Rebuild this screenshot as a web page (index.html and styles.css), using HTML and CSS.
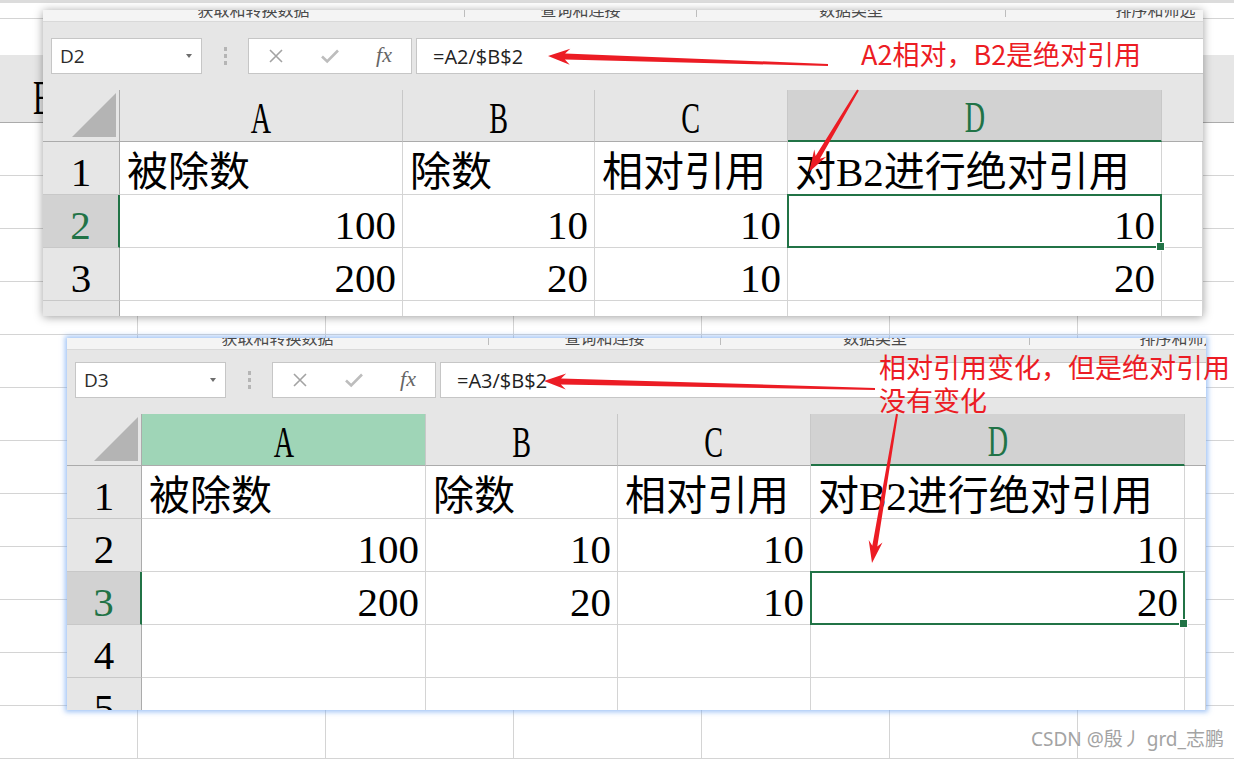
FILE: index.html
```html
<!DOCTYPE html>
<html lang="zh-CN">
<head>
<meta charset="utf-8">
<title>相对引用与绝对引用</title>
<link rel="stylesheet" href="styles.css">
</head>
<body>
<div class="page">
  <div class="bg">
    <div class="bg-top"></div>
    <div class="bg-ribbon"></div>
    <div class="bg-gap"></div>
    <div class="bg-head"><span class="bg-letter">E</span></div>
    <div class="bg-grid"></div>
  </div>

  <section class="win win1">
    <div class="strip">
      <div class="grp g1"><span>获取和转换数据</span></div>
      <div class="grp g2"><span>查询和连接</span></div>
      <div class="grp g3"><span>数据类型</span></div>
      <div class="grp g4"><span>排序和筛选</span></div>
    </div>
    <div class="toolbar">
      <div class="namebox"><span>D2</span><i class="caret"></i></div>
      <div class="dots"><i></i><i></i><i></i></div>
      <div class="btns">
        <span class="btn"><svg width="16" height="16" viewBox="0 0 16 16"><path d="M2 2L14 14M14 2L2 14" stroke="#a3a3a3" stroke-width="1.6" fill="none"/></svg></span>
        <span class="btn"><svg width="20" height="16" viewBox="0 0 20 16"><path d="M2 8.5l5.2 5L18 2.5" stroke="#bdbdbd" stroke-width="2.6" fill="none"/></svg></span>
        <span class="btn fx">fx</span>
      </div>
      <div class="formula">=A2/$B$2</div>
    </div>
    <div class="sheet">
      <div class="corner"><svg width="44" height="44" viewBox="0 0 44 44"><polygon points="0,44 44,44 44,0" fill="#b4b4b4"/></svg></div>
      <div class="ch"><span>A</span></div>
      <div class="ch"><span>B</span></div>
      <div class="ch"><span>C</span></div>
      <div class="ch sel"><span>D</span></div>
      <div class="ch last"></div>

      <div class="rh">1</div>
      <div class="c">被除数</div>
      <div class="c">除数</div>
      <div class="c">相对引用</div>
      <div class="c">对B2进行绝对引用</div>
      <div class="c"></div>

      <div class="rh sel">2</div>
      <div class="c n">100</div>
      <div class="c n">10</div>
      <div class="c n">10</div>
      <div class="c n act">10</div>
      <div class="c"></div>

      <div class="rh">3</div>
      <div class="c n">200</div>
      <div class="c n">20</div>
      <div class="c n">10</div>
      <div class="c n">20</div>
      <div class="c"></div>

      <div class="rh">4</div>
      <div class="c"></div>
      <div class="c"></div>
      <div class="c"></div>
      <div class="c"></div>
      <div class="c"></div>
    </div>
  </section>

  <section class="win win2">
    <div class="strip">
      <div class="grp g1"><span>获取和转换数据</span></div>
      <div class="grp g2"><span>查询和连接</span></div>
      <div class="grp g3"><span>数据类型</span></div>
      <div class="grp g4"><span>排序和筛选</span></div>
    </div>
    <div class="toolbar">
      <div class="namebox"><span>D3</span><i class="caret"></i></div>
      <div class="dots"><i></i><i></i><i></i></div>
      <div class="btns">
        <span class="btn"><svg width="16" height="16" viewBox="0 0 16 16"><path d="M2 2L14 14M14 2L2 14" stroke="#a3a3a3" stroke-width="1.6" fill="none"/></svg></span>
        <span class="btn"><svg width="20" height="16" viewBox="0 0 20 16"><path d="M2 8.5l5.2 5L18 2.5" stroke="#bdbdbd" stroke-width="2.6" fill="none"/></svg></span>
        <span class="btn fx">fx</span>
      </div>
      <div class="formula">=A3/$B$2</div>
    </div>
    <div class="sheet">
      <div class="corner"><svg width="44" height="44" viewBox="0 0 44 44"><polygon points="0,44 44,44 44,0" fill="#b4b4b4"/></svg></div>
      <div class="ch hl"><span>A</span></div>
      <div class="ch"><span>B</span></div>
      <div class="ch"><span>C</span></div>
      <div class="ch sel"><span>D</span></div>
      <div class="ch last"></div>

      <div class="rh">1</div>
      <div class="c">被除数</div>
      <div class="c">除数</div>
      <div class="c">相对引用</div>
      <div class="c">对B2进行绝对引用</div>
      <div class="c"></div>

      <div class="rh">2</div>
      <div class="c n">100</div>
      <div class="c n">10</div>
      <div class="c n">10</div>
      <div class="c n">10</div>
      <div class="c"></div>

      <div class="rh sel">3</div>
      <div class="c n">200</div>
      <div class="c n">20</div>
      <div class="c n">10</div>
      <div class="c n act">20</div>
      <div class="c"></div>

      <div class="rh">4</div>
      <div class="c"></div>
      <div class="c"></div>
      <div class="c"></div>
      <div class="c"></div>
      <div class="c"></div>

      <div class="rh">5</div>
      <div class="c"></div>
      <div class="c"></div>
      <div class="c"></div>
      <div class="c"></div>
      <div class="c"></div>
    </div>
  </section>

  <div class="note note1">A2相对，B2是绝对引用</div>
  <div class="note note2">相对引用变化，但是绝对引用<br>没有变化</div>

  <svg class="arrows" width="1234" height="759" viewBox="0 0 1234 759">
    <polygon points="548,56 569.7,64.7 564.9,59.5 828,66 828,64 565.1,53.5 570.3,48.7" fill="#ec1c24"/>
    <polygon points="809,172 826.3,156.7 819.9,158.7 858.9,90.5 857.1,89.5 815.6,156.1 814.3,149.5" fill="#ec1c24"/>
    <polygon points="544,381 565.8,389.5 560.9,384.4 875,390 875,388 561.1,378.4 566.2,373.5" fill="#ec1c24"/>
    <polygon points="872,563 882.5,542.5 877.3,546.6 898,414.2 896,413.8 872.3,545.8 868.7,540.1" fill="#ec1c24"/>
  </svg>

  <div class="mark">CSDN @殷丿 grd_志鹏</div>
</div>
</body>
</html>
```

FILE: styles.css
```css
* { box-sizing: border-box; margin: 0; padding: 0; }
html, body { width: 1234px; height: 759px; overflow: hidden; background: #fff; }
body { font-family: "Noto Sans CJK SC", sans-serif; }

.page { position: relative; width: 1234px; height: 759px; overflow: hidden; background: #fff; }

/* background workbook */
.bg { display: flex; flex-direction: column; height: 100%; }
.bg-top { flex: none; height: 3px; background: #dcdcdc; }
.bg-ribbon { flex: none; height: 16px; border-bottom: 1px solid #d4d4d4; }
.bg-gap { flex: none; height: 36px; }
.bg-head { flex: none; height: 68px; background: #e6e6e6; border-bottom: 1px solid #ababab; display: flex; align-items: flex-end; }
.bg-letter { display: inline-block; margin-left: 33px; font: 48px/1 "Liberation Serif", serif; color: #000; transform: scaleX(.62); transform-origin: left bottom; }
.bg-grid {
  flex: 1;
  background-image:
    repeating-linear-gradient(to bottom, transparent 0 52px, #d4d4d4 52px 53px),
    repeating-linear-gradient(to right, transparent 0 187px, #d4d4d4 187px 188px);
  background-position: 0 0, -50px 0;
}

/* windows */
.win { position: absolute; background: #e6e6e6; overflow: hidden; display: flex; flex-direction: column; }
.win1 { left: 43px; top: 10px; width: 1160px; height: 306px; box-shadow: 0 1px 9px rgba(0,0,0,.38); }
.win2 { left: 67px; top: 338px; width: 1139px; height: 372px; box-shadow: 0 0 5px 2px rgba(110,165,240,.65); }

.strip { flex: none; height: 12px; display: flex; background: #f4f4f4; border-bottom: 1px solid #d9d9d9; overflow: hidden; }
.grp { flex: none; height: 7px; display: flex; justify-content: center; border-right: 1px solid #bdbdbd; }
.grp span { display: block; margin-top: -9px; font-size: 16px; line-height: 16px; color: #4a4a4a; white-space: nowrap; }
.g1 { width: 422px; }
.g2 { width: 232px; }
.g3 { width: 309px; }
.g4 { width: 300px; }

.toolbar { flex: none; display: flex; align-items: flex-end; padding: 0 0 16px 8px; }
.win1 .toolbar { height: 68px; }
.win2 .toolbar { height: 64px; }

.namebox { flex: none; width: 151px; height: 36px; background: #fff; border: 1px solid #c6c6c6; display: flex; align-items: center; justify-content: space-between; padding: 0 9px 0 8px; font: 19px "Open Sans", sans-serif; color: #2b2b2b; }
.caret { display: block; width: 0; height: 0; border-left: 3.5px solid transparent; border-right: 3.5px solid transparent; border-top: 4px solid #6d6d6d; }
.dots { flex: none; width: 46px; height: 36px; display: flex; flex-direction: column; align-items: center; justify-content: center; gap: 3px; }
.dots i { display: block; width: 3px; height: 4px; background: #b5b5b5; }
.btns { flex: none; width: 164px; height: 36px; background: #fff; border: 1px solid #c6c6c6; display: flex; }
.btn { width: 54px; display: flex; align-items: center; justify-content: center; }
.fx { font: italic 22px "Liberation Serif", serif; color: #666; padding-bottom: 2px; }
.formula { flex: 1; height: 36px; margin-left: 4px; margin-right: -2px; background: #fff; border: 1px solid #c6c6c6; display: flex; align-items: center; padding-left: 16px; font: 20px "Open Sans", sans-serif; color: #222; }

/* sheet */
.sheet { flex: 1; min-height: 0; display: grid; grid-template-rows: 52px; grid-auto-rows: 53px; background: #fff; font-family: "Liberation Serif", "Noto Sans CJK SC", serif; color: #000; }
.win1 .sheet { grid-template-columns: 77px 283px 192px 193px 374px 1fr; }
.win2 .sheet { grid-template-columns: 75px 284px 192px 193px 374px 1fr; }

.corner { background: #e6e6e6; border-right: 1px solid #ababab; border-bottom: 1px solid #ababab; display: flex; justify-content: flex-end; align-items: flex-end; padding: 0 3px 4px 0; }
.ch { background: #e6e6e6; border-right: 1px solid #c8c8c8; border-bottom: 1px solid #ababab; display: flex; justify-content: center; align-items: flex-end; font-size: 44px; line-height: 1; }
.ch span { display: inline-block; transform: scaleX(.64); }
.ch.sel { background: #d2d2d2; color: #217346; border-bottom: 2px solid #217346; }
.ch.hl { background: #9fd5b7; }
.ch.last { border-right: none; }

.rh { background: #e6e6e6; border-right: 1px solid #ababab; border-bottom: 1px solid #c8c8c8; display: flex; justify-content: center; align-items: flex-end; font-size: 41px; line-height: 1; padding-bottom: 1px; }
.rh.sel { background: #d2d2d2; color: #217346; border-right: 2px solid #217346; }

.c { background: #fff; border-right: 1px solid #d4d4d4; border-bottom: 1px solid #d4d4d4; display: flex; align-items: flex-end; font-size: 41px; line-height: 1; padding: 0 6px 1px 7px; white-space: nowrap; }
.c.n { justify-content: flex-end; }
.c.act { position: relative; z-index: 2; }
.c.act::after { content: ""; position: absolute; left: -1px; top: -1px; right: -1px; bottom: -1px; border: 2px solid #217346; }
.c.act::before { content: ""; position: absolute; right: -4px; bottom: -4px; width: 7px; height: 7px; background: #217346; border: 1px solid #fff; z-index: 1; }

/* annotations */
.note { position: absolute; color: #ec1c24; font-family: "Noto Sans CJK SC", sans-serif; font-size: 27px; white-space: nowrap; }
.note1 { left: 861px; top: 40px; line-height: 1; }
.note2 { left: 879px; top: 350px; line-height: 33px; }

.arrows { position: absolute; left: 0; top: 0; pointer-events: none; }

.mark { position: absolute; left: 1031px; top: 730px; font: 19px/1 "Noto Sans", "Noto Sans CJK SC", sans-serif; color: #a3a3a3; white-space: nowrap; }
```
